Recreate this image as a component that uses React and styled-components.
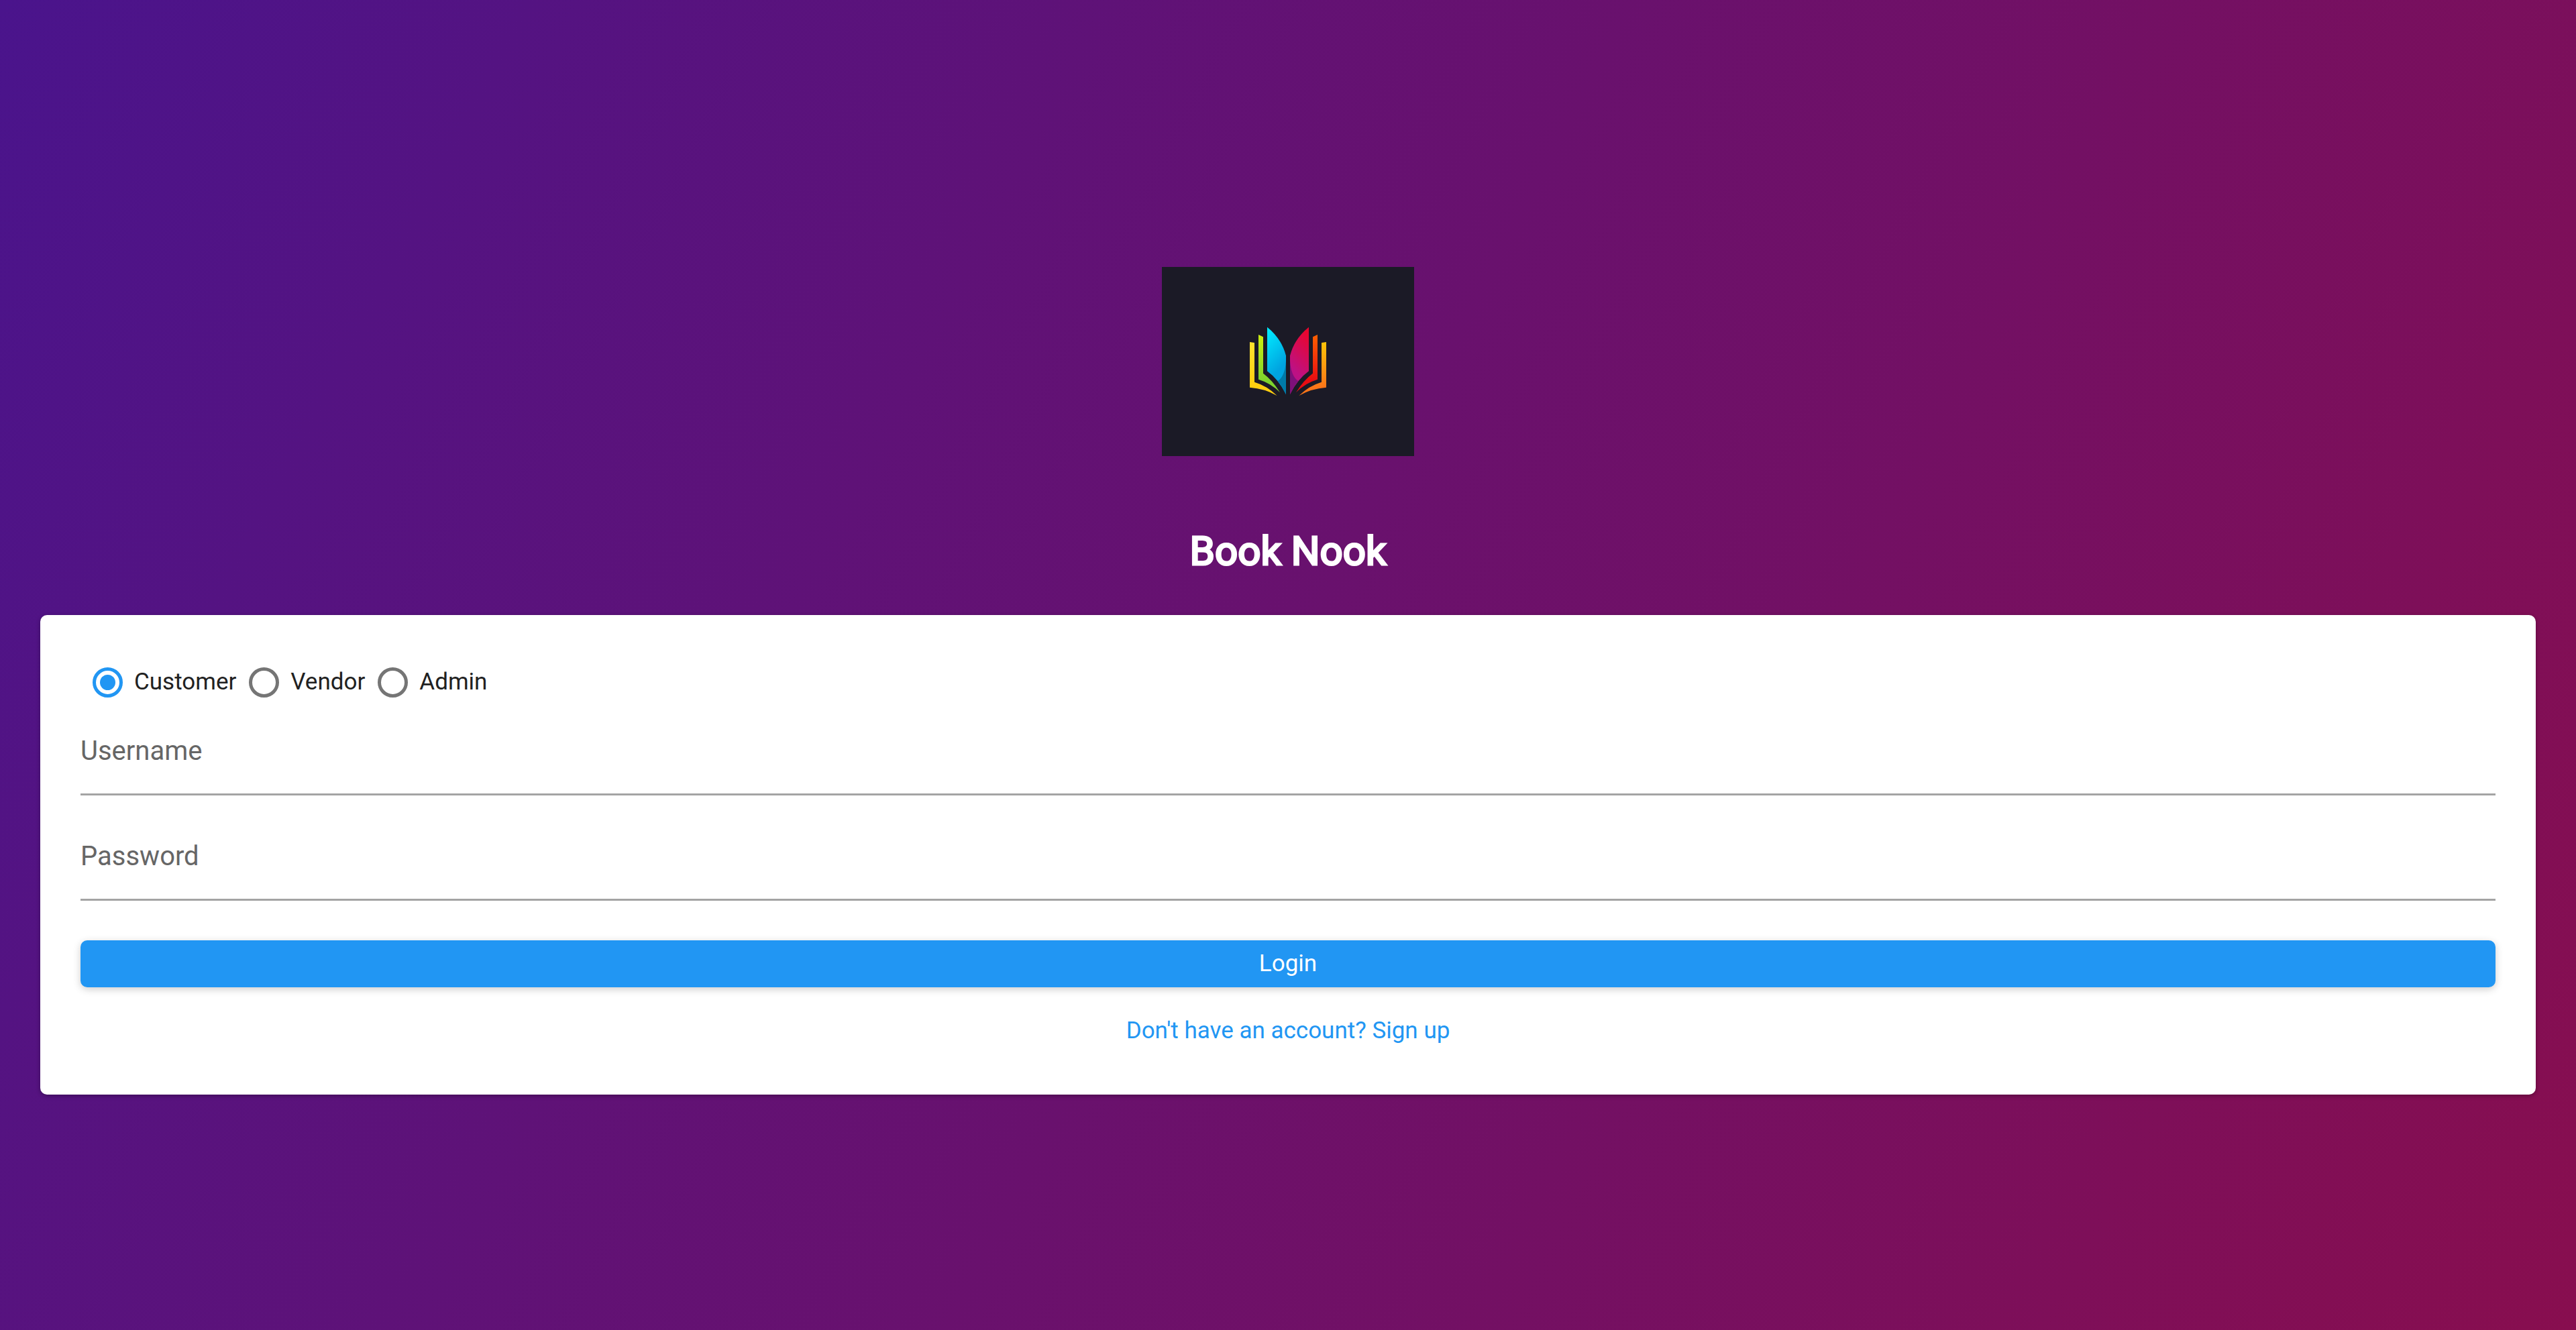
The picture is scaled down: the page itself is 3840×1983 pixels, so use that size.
import React, { useState } from "react";
import styled, { createGlobalStyle } from "styled-components";

const GlobalStyle = createGlobalStyle`
  *, *::before, *::after { box-sizing: border-box; }
  body {
    margin: 0;
    font-family: Roboto, "Liberation Sans", sans-serif;
    color: #212121;
  }
`;

const Page = styled.main`
  min-height: 100vh;
  display: flex;
  flex-direction: column;
  align-items: center;
  justify-content: center;
  padding: 47px 60px 0;
  background: linear-gradient(117.3deg, #4a148c, #880e4f);
`;

const Logo = styled.svg`
  display: block;
  width: 376px;
  height: 282px;
  background: #1b1a26;
`;

const Title = styled.h1`
  margin: 100px 0 53px;
  font-size: 60px;
  line-height: 84px;
  font-weight: 400;
  color: #fff;
  -webkit-text-stroke: 3px #fff;
`;

const Card = styled.form`
  width: 100%;
  display: flex;
  flex-direction: column;
  padding: 60px;
  border-radius: 10px;
  background: #fff;
  box-shadow: 0 2px 6px rgba(0, 0, 0, 0.3);
`;

const Roles = styled.fieldset`
  display: flex;
  gap: 1px;
  margin: 0;
  padding: 0;
  border: 0;
`;

const Role = styled.label`
  display: flex;
  align-items: center;
  gap: 17px;
  height: 80px;
  padding-left: 18px;
  font-size: 35px;
  line-height: 50px;
`;

const Radio = styled.input`
  appearance: none;
  display: grid;
  place-items: center;
  width: 45px;
  height: 45px;
  margin: 0;
  border: 5px solid #757575;
  border-radius: 50%;

  &:checked { border-color: #2196f3; }

  &:checked::before {
    content: "";
    width: 23px;
    height: 23px;
    border-radius: 50%;
    background: #2196f3;
  }
`;

const Fields = styled.div`
  display: flex;
  flex-direction: column;
  gap: 28px;
  margin-bottom: 59px;
`;

const Field = styled.div`
  display: grid;
  align-items: center;
  height: 129px;
  border-bottom: 3px solid #a4a4a4;
`;

const FieldLabel = styled.label`
  grid-area: 1 / 1;
  font-size: 40px;
  line-height: 50px;
  color: #666;
  pointer-events: none;
  visibility: ${(p) => (p.$filled ? "hidden" : "visible")};
`;

const FieldInput = styled.input`
  grid-area: 1 / 1;
  width: 100%;
  height: 80px;
  padding: 0;
  border: 0;
  outline: 0;
  background: transparent;
  font: inherit;
  font-size: 40px;
  color: inherit;
`;

const LoginButton = styled.button`
  height: 70px;
  border: 0;
  border-radius: 10px;
  background: #2196f3;
  color: #fff;
  font: inherit;
  font-size: 35px;
  line-height: 50px;
  box-shadow: 0 3px 12px rgba(0, 0, 0, 0.2);
`;

const SignUpLink = styled.a`
  align-self: center;
  margin-top: 30px;
  padding: 10px 20px;
  font-size: 35px;
  line-height: 50px;
  color: #2196f3;
  text-decoration: none;
`;

function BookLogo() {
  return (
    <Logo viewBox="0 0 376 282" role="img" aria-label="Open book">
      <defs>
        <linearGradient id="cyan" x1="0" y1="0" x2="0.3" y2="1">
          <stop offset="0.05" stopColor="#00eaff" />
          <stop offset="0.75" stopColor="#00a4e0" />
        </linearGradient>
        <linearGradient id="pink" x1="0.8" y1="0" x2="0.5" y2="1">
          <stop offset="0.05" stopColor="#e8062e" />
          <stop offset="0.75" stopColor="#bd1184" />
        </linearGradient>
        <linearGradient id="green" x1="0" y1="0" x2="0" y2="1">
          <stop offset="0" stopColor="#cdee10" />
          <stop offset="0.8" stopColor="#7ed32c" />
        </linearGradient>
        <linearGradient id="yellow" x1="0" y1="0" x2="0" y2="1">
          <stop offset="0" stopColor="#ffe22e" />
          <stop offset="0.8" stopColor="#ffcf10" />
        </linearGradient>
        <linearGradient id="red" x1="0" y1="0" x2="0" y2="1">
          <stop offset="0" stopColor="#ff6000" />
          <stop offset="0.8" stopColor="#e80c12" />
        </linearGradient>
        <linearGradient id="orange" x1="0" y1="0" x2="0" y2="1">
          <stop offset="0" stopColor="#fdc408" />
          <stop offset="0.85" stopColor="#fb7418" />
        </linearGradient>
      </defs>
      <g transform="translate(108 72) scale(0.33333)">
        <path fill="url(#yellow)" d="M69 120L90 123V299Q147 316 191 360Q137 328 69 323Z" />
        <path fill="url(#green)" d="M108 87L129 97V260Q170 290 204 345Q164 304 108 287Z" />
        <path fill="url(#cyan)" d="M147 53Q211 104 231 181V354Q198 287 147 250Z" />
        <path fill="#007aa8" d="M231 205V354Q215 320 194 295Q226 274 231 205Z" />
        <path fill="url(#orange)" d="M411 120L390 123V299Q333 316 289 360Q343 328 411 323Z" />
        <path fill="url(#red)" d="M372 87L351 97V260Q310 290 276 345Q316 304 372 287Z" />
        <path fill="url(#pink)" d="M333 53Q269 104 249 181V354Q282 287 333 250Z" />
        <path fill="#7f107a" d="M249 205V354Q265 320 286 295Q254 274 249 205Z" />
      </g>
    </Logo>
  );
}

function TextField({ id, label, type }) {
  const [value, setValue] = useState("");
  return (
    <Field>
      <FieldLabel htmlFor={id} $filled={value !== ""}>{label}</FieldLabel>
      <FieldInput id={id} type={type} value={value} onChange={(e) => setValue(e.target.value)} />
    </Field>
  );
}

const roles = ["Customer", "Vendor", "Admin"];

export default function App() {
  const [role, setRole] = useState("Customer");
  return (
    <>
      <GlobalStyle />
      <Page>
        <BookLogo />
        <Title>Book Nook</Title>
        <Card onSubmit={(e) => e.preventDefault()}>
          <Roles aria-label="Account type">
            {roles.map((name) => (
              <Role key={name}>
                <Radio type="radio" name="role" checked={role === name} onChange={() => setRole(name)} />
                {name}
              </Role>
            ))}
          </Roles>
          <Fields>
            <TextField id="username" label="Username" type="text" />
            <TextField id="password" label="Password" type="password" />
          </Fields>
          <LoginButton type="submit">Login</LoginButton>
          <SignUpLink href="#signup">Don't have an account? Sign up</SignUpLink>
        </Card>
      </Page>
    </>
  );
}
